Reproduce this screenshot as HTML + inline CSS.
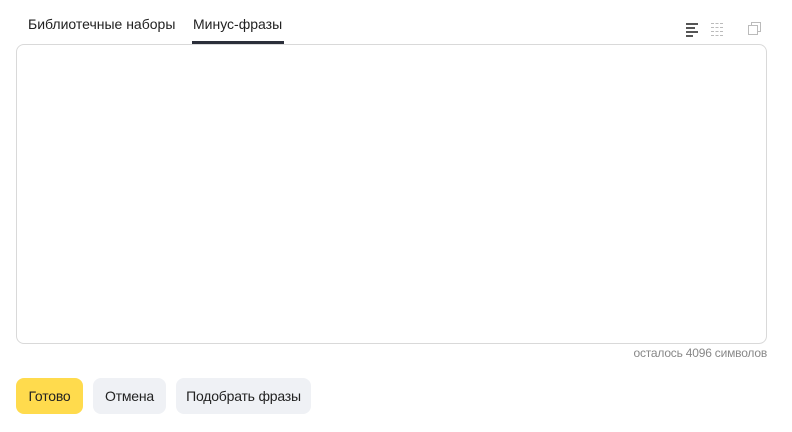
<!DOCTYPE html>
<html><head><meta charset="utf-8"><style>
body{margin:0;width:792px;height:432px;background:#fff;font-family:"Liberation Sans",sans-serif;position:relative;overflow:hidden;color:#222}
.t{position:absolute;top:16px;font-size:14px;letter-spacing:0px}
.ta{position:absolute;left:192px;top:41px;width:92px;height:3px;background:#2b2f3a}
.box{position:absolute;left:16px;top:44px;width:749px;height:298px;border:1px solid #d9d9d9;border-radius:8px}
.cnt{position:absolute;right:25px;top:346px;font-size:12px;color:#888;letter-spacing:-0.2px}
.b{position:absolute;top:378px;height:36px;line-height:36px;border-radius:8px;font-size:14px;text-align:center;letter-spacing:-0.2px}
.i{position:absolute;height:2px}
</style></head><body>
<div class="t" style="left:28px">Библиотечные наборы</div>
<div class="t" style="left:193px">Минус-фразы</div>
<div class="ta"></div>
<div class="i" style="left:686px;top:23px;width:12px;background:#555"></div>
<div class="i" style="left:686px;top:27px;width:9px;background:#555"></div>
<div class="i" style="left:686px;top:31px;width:12px;background:#555"></div>
<div class="i" style="left:686px;top:35px;width:7px;background:#555"></div>
<div class="i" style="left:711px;top:23px;width:12px;border-top:1px dashed #bbb;height:0"></div>
<div class="i" style="left:711px;top:27px;width:12px;border-top:1px dashed #bbb;height:0"></div>
<div class="i" style="left:711px;top:31px;width:12px;border-top:1px dashed #bbb;height:0"></div>
<div class="i" style="left:711px;top:35px;width:12px;border-top:1px dashed #bbb;height:0"></div>
<div style="position:absolute;left:751px;top:22px;width:8px;height:8px;border:1px solid #bbb"></div>
<div style="position:absolute;left:748px;top:25px;width:8px;height:8px;border:1px solid #bbb;background:#fff"></div>
<div class="box"></div>
<div class="cnt">осталось 4096 символов</div>
<div class="b" style="left:16px;width:67px;background:#ffdb4d">Готово</div>
<div class="b" style="left:93px;width:73px;background:#eff1f5">Отмена</div>
<div class="b" style="left:176px;width:135px;background:#eff1f5">Подобрать фразы</div>
</body></html>
